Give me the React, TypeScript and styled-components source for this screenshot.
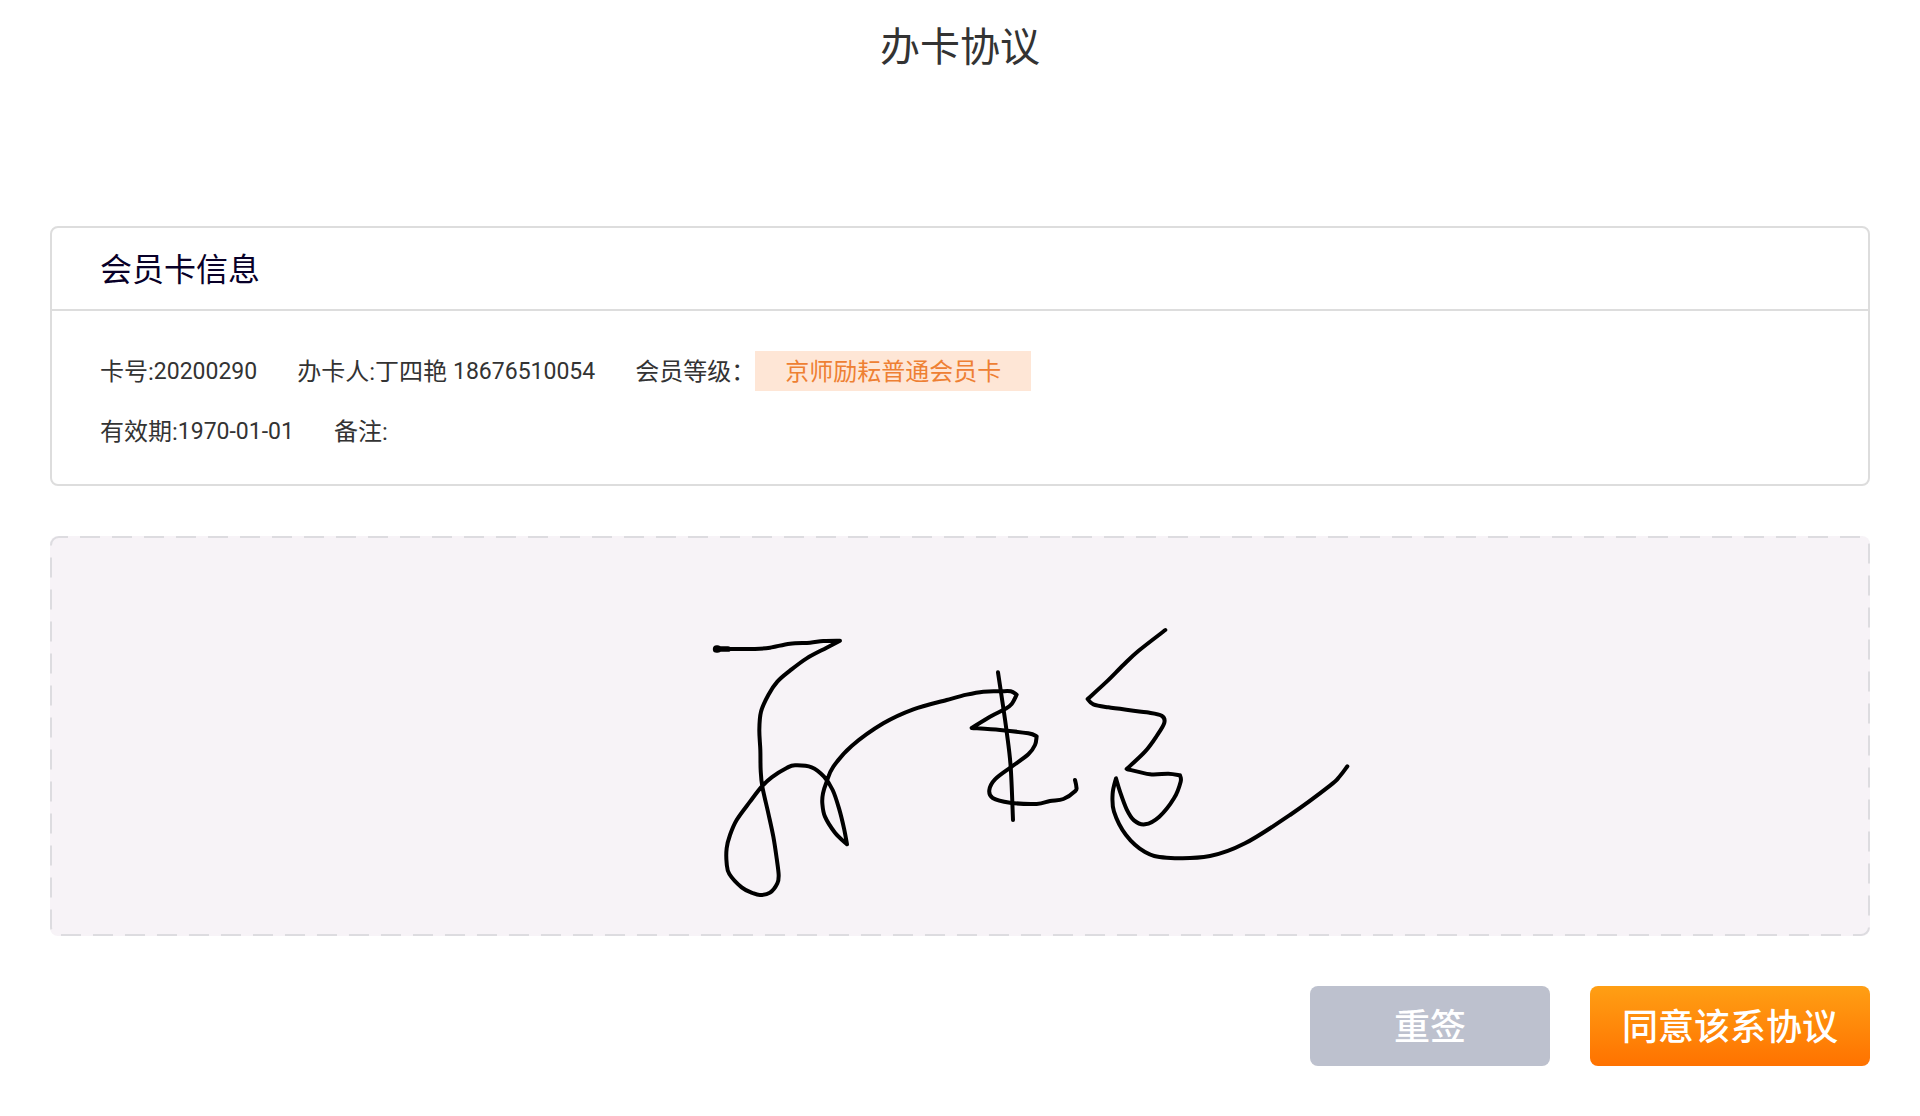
import React from "react";
import styled, { createGlobalStyle } from "styled-components";

const GlobalStyle = createGlobalStyle`
  *, *::before, *::after { box-sizing: border-box; }
  body {
    margin: 0;
    background: #fff;
    color: #333;
    font-family: Roboto, "Noto Sans CJK SC", sans-serif;
  }
`;

const Page = styled.div`
  min-height: 100vh;
  display: flex;
  flex-direction: column;
`;

const TitleBar = styled.header`
  height: 96px;
  display: flex;
  align-items: center;
  justify-content: center;
`;

const Title = styled.h1`
  margin: 0;
  font-size: 40px;
  line-height: 60px;
  font-weight: 400;
`;

const Content = styled.main`
  display: flex;
  flex-direction: column;
  gap: 50px;
  padding: 130px 50px 50px;
`;

const Card = styled.section`
  border: 2px solid #ddd;
  border-radius: 8px;
`;

const CardHeader = styled.div`
  padding: 18px 48px 15px;
  border-bottom: 2px solid #ddd;
`;

const CardTitle = styled.h2`
  margin: 0;
  color: #080028;
  font-size: 32px;
  line-height: 48px;
  font-weight: 400;
`;

const CardBody = styled.div`
  padding: 30px 48px 23px;
`;

const InfoRow = styled.div`
  display: flex;
  flex-wrap: wrap;
  align-items: center;
  gap: 0 40px;
  min-height: 60px;
`;

const InfoItem = styled.div`
  display: flex;
  align-items: center;
  font-size: 24px;
  line-height: 38px;
  white-space: pre;
  padding-top: 2px;
`;

const Figures = styled.span`
  font-size: 23px;
`;

const LevelTag = styled.span`
  margin-top: -2px;
  padding: 2px 30px 0;
  background: #fee6d6;
  color: #ee8033;
`;

const SignaturePad = styled.section`
  position: relative;
  height: 400px;
  border-radius: 8px;
  background: #f7f3f7;
`;

const PadOutline = styled.svg`
  position: absolute;
  inset: 0;
  width: 100%;
  height: 100%;

  rect {
    width: calc(100% - 2px);
    height: calc(100% - 2px);
  }
`;

const Ink = styled.svg`
  position: absolute;
  inset: 0;
  width: 100%;
  height: 100%;
`;

const Actions = styled.div`
  display: flex;
  justify-content: flex-end;
  gap: 40px;
`;

const ActionButton = styled.button<{ $primary?: boolean }>`
  width: ${(p) => (p.$primary ? "280px" : "240px")};
  height: 80px;
  padding: 4px 0 0;
  border: 0;
  border-radius: 8px;
  background: ${(p) =>
    p.$primary ? "linear-gradient(#ff9f14, #ff7200)" : "#bdc1ce"};
  color: #fff;
  font-family: inherit;
  font-size: 36px;
  font-weight: 500;
  line-height: 54px;
  cursor: pointer;
`;

type Point = [number, number];

// Each stroke is a list of smooth runs; the pen turns sharply between runs.
const strokes: Point[][][] = [
  [
    [[48, 147], [110, 147], [165, 147], [210, 143], [270, 131], [330, 128], [370, 123], [420, 122]],
    [[420, 122], [380, 143], [320, 175], [270, 212], [232, 245], [205, 285], [183, 335], [178, 390], [181, 450], [182, 510], [187, 560], [205, 640], [220, 710], [230, 775], [236, 825], [232, 850], [210, 878], [180, 885], [158, 879], [125, 862], [88, 822], [80, 790], [80, 745], [90, 705], [110, 660], [150, 605], [185, 560], [215, 532], [260, 504], [285, 496], [335, 502], [372, 530], [398, 570], [417, 625], [432, 685], [441, 733]],
    [[441, 733], [405, 698], [375, 650], [367, 610], [369, 580], [380, 545], [400, 500], [455, 438], [550, 370], [640, 328], [740, 300], [800, 284], [850, 275], [900, 274], [932, 274], [950, 284]],
    [[950, 284], [935, 312], [915, 327], [870, 350], [815, 384]],
    [[815, 384], [900, 390], [985, 400], [1010, 409]],
    [[1010, 409], [1005, 435], [985, 463], [935, 500], [885, 538], [868, 570], [878, 594], [930, 608], [1010, 612], [1050, 603], [1090, 597], [1126, 573], [1129, 560], [1125, 540]],
  ],
  [[[894, 217], [905, 290], [920, 395], [932, 500], [939, 660]]],
  [
    [[1396, 90], [1315, 153], [1270, 195], [1220, 245], [1163, 297]],
    [[1163, 297], [1180, 313], [1225, 322], [1340, 337], [1385, 347], [1393, 368], [1370, 408], [1335, 455], [1280, 507]],
    [[1280, 507], [1350, 523], [1405, 521], [1440, 526]],
    [[1440, 526], [1442, 545], [1422, 595], [1378, 650], [1335, 673], [1302, 661], [1280, 628], [1260, 575], [1248, 535]],
    [[1248, 535], [1238, 580], [1242, 635], [1278, 705], [1335, 756], [1400, 773], [1530, 768], [1635, 730], [1770, 645], [1890, 557], [1920, 528], [1942, 499]],
  ],
];

function smoothRun(points: Point[]): string {
  let d = "";
  for (let i = 0; i < points.length - 1; i++) {
    const before = points[i - 1] ?? points[i];
    const from = points[i];
    const to = points[i + 1];
    const after = points[i + 2] ?? to;
    const c1 = [from[0] + (to[0] - before[0]) / 6, from[1] + (to[1] - before[1]) / 6];
    const c2 = [to[0] - (after[0] - from[0]) / 6, to[1] - (after[1] - from[1]) / 6];
    d += `C${c1.join(" ")} ${c2.join(" ")} ${to.join(" ")}`;
  }
  return d;
}

function strokePath(runs: Point[][]): string {
  return `M${runs[0][0].join(" ")}` + runs.map(smoothRun).join("");
}

export default function App() {
  return (
    <>
      <GlobalStyle />
      <Page>
        <TitleBar>
          <Title>办卡协议</Title>
        </TitleBar>
        <Content>
          <Card>
            <CardHeader>
              <CardTitle>会员卡信息</CardTitle>
            </CardHeader>
            <CardBody>
              <InfoRow>
                <InfoItem>
                  卡号:<Figures>20200290</Figures>
                </InfoItem>
                <InfoItem>
                  办卡人:丁四艳 <Figures>18676510054</Figures>
                </InfoItem>
                <InfoItem>
                  会员等级：<LevelTag>京师励耘普通会员卡</LevelTag>
                </InfoItem>
              </InfoRow>
              <InfoRow>
                <InfoItem>
                  有效期:<Figures>1970-01-01</Figures>
                </InfoItem>
                <InfoItem>备注:</InfoItem>
              </InfoRow>
            </CardBody>
          </Card>
          <SignaturePad aria-label="签名">
            <PadOutline aria-hidden="true">
              <rect
                x="1"
                y="1"
                rx="8"
                fill="none"
                stroke="#dddce0"
                strokeWidth="2"
                strokeDasharray="20 12"
                strokeDashoffset="11"
              />
            </PadOutline>
            <Ink viewBox="0 0 1820 400" aria-hidden="true">
              <g
                transform="translate(650 64) scale(0.33333)"
                fill="none"
                stroke="#000"
                strokeWidth="12"
                strokeLinecap="round"
                strokeLinejoin="round"
              >
                {strokes.map((runs, i) => (
                  <path key={i} d={strokePath(runs)} />
                ))}
                <path d="M50 147L52 147" strokeWidth="23" />
                <path d="M52 147L84 147" strokeWidth="17" />
              </g>
            </Ink>
          </SignaturePad>
          <Actions>
            <ActionButton type="button">重签</ActionButton>
            <ActionButton type="button" $primary>
              同意该系协议
            </ActionButton>
          </Actions>
        </Content>
      </Page>
    </>
  );
}
